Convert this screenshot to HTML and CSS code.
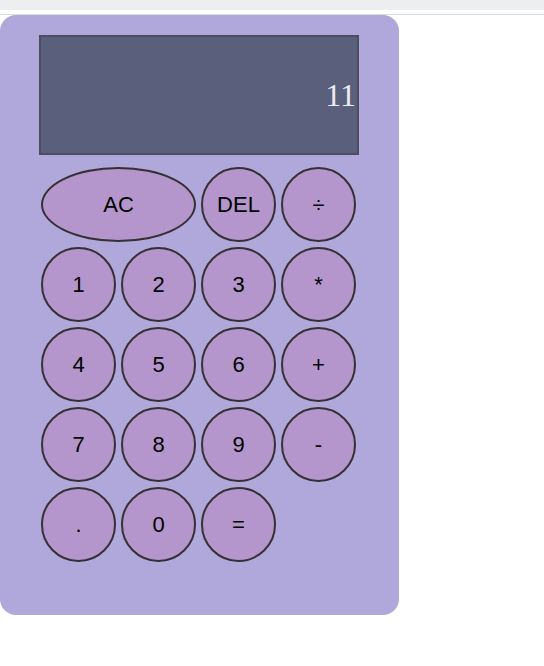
FILE: index.html
```html
<!DOCTYPE html>
<html>
<head>
<meta charset="utf-8">
<link rel="stylesheet" href="styles.css">
</head>
<body>
<div class="topbar"></div>
<div class="topline"></div>
<div class="calculator">
  <div class="display">11</div>
  <div class="keys">
    <button class="key wide">AC</button>
    <button class="key">DEL</button>
    <button class="key">÷</button>
    <button class="key">1</button>
    <button class="key">2</button>
    <button class="key">3</button>
    <button class="key">*</button>
    <button class="key">4</button>
    <button class="key">5</button>
    <button class="key">6</button>
    <button class="key">+</button>
    <button class="key">7</button>
    <button class="key">8</button>
    <button class="key">9</button>
    <button class="key">-</button>
    <button class="key">.</button>
    <button class="key">0</button>
    <button class="key">=</button>
  </div>
</div>
</body>
</html>
```
FILE: styles.css
```css
html, body {
  margin: 0;
  padding: 0;
  background: #ffffff;
}
.topbar {
  height: 10px;
  background: #edeef0;
}
.topline {
  height: 4px;
  background: #ffffff;
  border-bottom: 1px solid #dcdcdc;
}
.calculator {
  width: 399px;
  height: 600px;
  box-sizing: border-box;
  padding: 20px 0 0 39px;
  background: #b0a8da;
  border-radius: 16px;
}
.display {
  width: 320px;
  height: 120px;
  box-sizing: border-box;
  border: 2px solid #4d4d62;
  background: #5a5f7c;
  color: #eeeaf4;
  font-family: "Liberation Serif", "Times New Roman", serif;
  font-size: 32px;
  display: flex;
  align-items: center;
  justify-content: flex-end;
  padding-right: 1px;
  margin-bottom: 12px;
}
.keys {
  display: grid;
  grid-template-columns: repeat(4, 75px);
  grid-auto-rows: 75px;
  gap: 5px;
  margin-left: 2px;
}
.key {
  box-sizing: border-box;
  width: 75px;
  height: 75px;
  border: 2px solid #363034;
  border-radius: 50%;
  background: #b496cc;
  color: #000;
  font-family: "Liberation Sans", Arial, sans-serif;
  font-size: 22px;
  padding: 0;
  margin: 0;
}
.key.wide {
  grid-column: span 2;
  width: 155px;
}
```
